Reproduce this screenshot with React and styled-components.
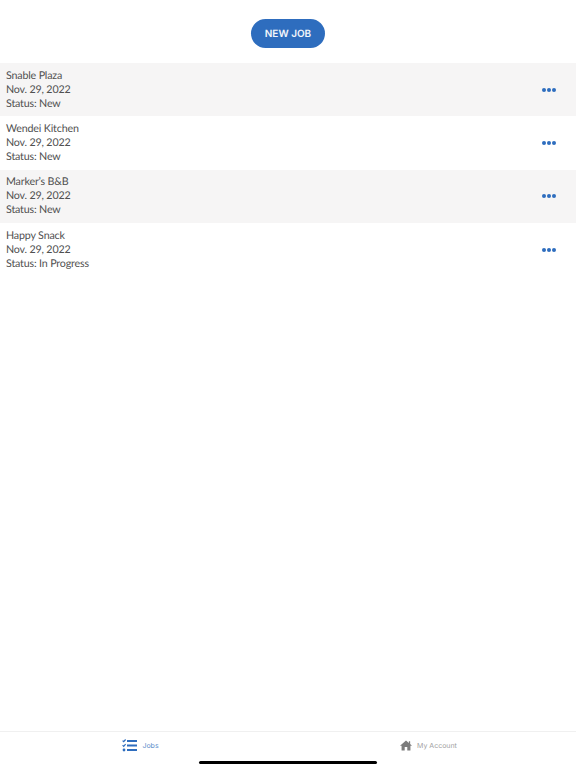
import React from 'react'
import styled, {createGlobalStyle} from 'styled-components'

const GlobalStyle = createGlobalStyle`
html, body {
    margin: 0;
    padding: 0;
    background: #fff;
}
`

const jobs = [
    {name: 'Snable Plaza', date: 'Nov. 29, 2022', status: 'New'},
    {name: 'Wendei Kitchen', date: 'Nov. 29, 2022', status: 'New'},
    {name: 'Marker’s B&B', date: 'Nov. 29, 2022', status: 'New'},
    {name: 'Happy Snack', date: 'Nov. 29, 2022', status: 'In Progress'},
]

const JobsIcon = () => (
    <svg width="15" height="13" viewBox="0 0 15 13" fill="none">
        <path d="M0.6 1.6 L1.7 2.7 L3.6 0.5 M0.6 6.2 L1.7 7.3 L3.6 5.1" stroke="#2e6dbe" strokeWidth="1.2" />
        <circle cx="2" cy="11" r="1.4" fill="#2e6dbe" />
        <path d="M5 2 H15 M5 6.5 H15 M5 11 H15" stroke="#2e6dbe" strokeWidth="1.8" />
    </svg>
)

const HomeIcon = () => (
    <svg width="12" height="11" viewBox="0 0 13 11">
        <path d="M6.5 0 L9.6 2.7 V0.8 H11 V3.9 L13 5.7 H11.3 V11 H7.9 V7.2 H5.1 V11 H1.7 V5.7 H0 Z" fill="#7c7c7c" />
    </svg>
)

export default function App() {
    return (
        <Page>
            <GlobalStyle />
            <Header>
                <NewJobButton>NEW JOB</NewJobButton>
            </Header>
            <JobList>
                {jobs.map((job, index) => (
                    <JobRow key={index} $shaded={index % 2 === 0}>
                        <JobText>
                            <div>{job.name}</div>
                            <div>{job.date}</div>
                            <div>Status: {job.status}</div>
                        </JobText>
                        <MoreDots>
                            <span />
                            <span />
                            <span />
                        </MoreDots>
                    </JobRow>
                ))}
            </JobList>
            <TabBar>
                <Tab $active>
                    <JobsIcon />
                    <TabLabel>Jobs</TabLabel>
                </Tab>
                <Tab>
                    <HomeIcon />
                    <TabLabel>My Account</TabLabel>
                </Tab>
            </TabBar>
            <HomeIndicator />
        </Page>
    )
}

const Page = styled.div`
position: relative;
display: flex;
flex-direction: column;
width: 576px;
height: 768px;
overflow: hidden;
background: #fff;
font-family: Lato, "Open Sans", sans-serif;
text-rendering: geometricPrecision;
`

const Header = styled.div`
display: flex;
justify-content: center;
padding-top: 19px;
height: 44px;
`

const NewJobButton = styled.button`
width: 74px;
height: 29px;
padding: 0;
border: none;
border-radius: 15px;
background: #2e6dbe;
color: #f2f6fb;
font-family: Inter, Roboto, sans-serif;
font-size: 10px;
font-weight: 600;
text-rendering: geometricPrecision;
`

const JobList = styled.div`
flex: 1;
display: flex;
flex-direction: column;
`

const JobRow = styled.div`
display: flex;
align-items: center;
justify-content: space-between;
height: 53.33px;
padding: 0 20px 0 6px;
background: ${props => props.$shaded ? '#f6f5f5' : '#fff'};
`

const JobText = styled.div`
color: #505050;
font-size: 10.7px;
letter-spacing: -0.17px;
line-height: 14px;
`

const MoreDots = styled.div`
display: flex;
gap: 1px;
span {
    width: 4px;
    height: 4px;
    border-radius: 50%;
    background: #2e6dbe;
}
`

const TabBar = styled.div`
display: flex;
height: 36px;
border-top: 1px solid #f0f0f0;
`

const Tab = styled.div`
flex: 1;
display: flex;
align-items: center;
justify-content: center;
gap: 5px;
height: 26px;
padding-right: 7px;
color: ${props => props.$active ? '#5b8bca' : '#a0a0a0'};
`

const TabLabel = styled.span`
font-family: Inter, Roboto, sans-serif;
font-size: 7px;
`

const HomeIndicator = styled.div`
position: absolute;
left: 199px;
bottom: 4px;
width: 178px;
height: 3px;
border-radius: 2px;
background: #000;
`
